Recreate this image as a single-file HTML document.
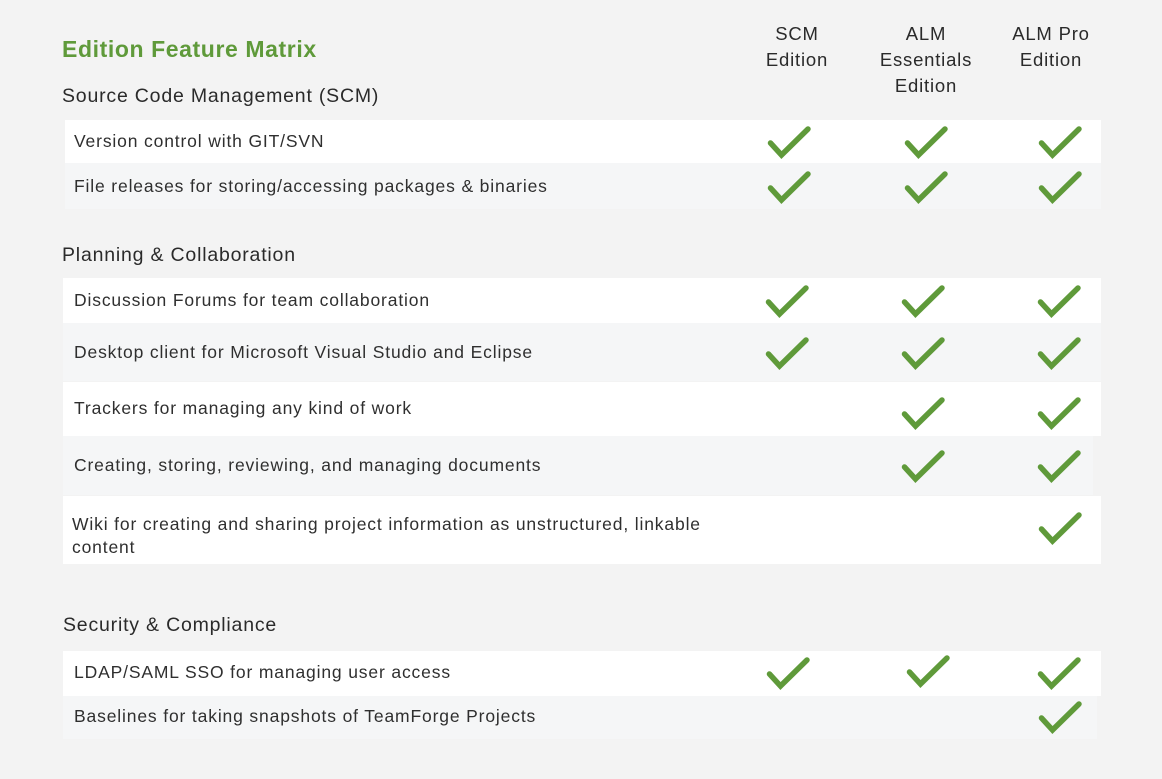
<!DOCTYPE html>
<html><head><meta charset="utf-8"><style>
body{margin:0;width:1162px;height:779px;background:#f3f3f3;font-family:"Liberation Sans",sans-serif;color:#2f2f2f;position:relative;overflow:hidden}
.a{position:absolute}
.t{font-weight:bold;color:#5f9a3a;font-size:23px;left:62px;top:36px;letter-spacing:0.6px}
.h{font-size:19.5px;left:62px;color:#2a2a2a;letter-spacing:0.8px}
.col{font-size:18.5px;text-align:center;line-height:26px;color:#2a2a2a;letter-spacing:0.8px}
.r{position:absolute;left:63px;width:1038px}
.w{background:#fff}.g{background:#f5f6f7}
.r span{position:absolute;left:11px;font-size:17.5px;letter-spacing:0.85px;line-height:23px;white-space:nowrap}
svg{position:absolute}
</style></head><body>
<div class="a t">Edition Feature Matrix</div>
<div class="a col" style="left:742px;width:110px;top:21px">SCM<br>Edition</div>
<div class="a col" style="left:861px;width:130px;top:21px">ALM<br>Essentials<br>Edition</div>
<div class="a col" style="left:991px;width:120px;top:21px">ALM Pro<br>Edition</div>
<div class="a h" style="top:85px">Source Code Management (SCM)</div>
<div class="r w" style="left:65px;width:1036px;top:120px;height:43px"><span style="top:10px;left:9px">Version control with GIT/SVN</span></div>
<div class="r g" style="left:65px;width:1036px;top:163px;height:46px"><span style="top:12px;left:9px">File releases for storing/accessing packages &amp; binaries</span></div>
<div class="a h" style="top:244px">Planning &amp; Collaboration</div>
<div class="r w" style="top:278px;height:45px"><span style="top:11px">Discussion Forums for team collaboration</span></div>
<div class="r g" style="top:323px;height:58px"><span style="top:18px">Desktop client for Microsoft Visual Studio and Eclipse</span></div>
<div class="r w" style="top:382px;height:54px"><span style="top:15px">Trackers for managing any kind of work</span></div>
<div class="r g" style="top:436px;height:59px;width:1030px"><span style="top:18px">Creating, storing, reviewing, and managing documents</span></div>
<div class="r w" style="top:496px;height:68px"><span style="top:17px;left:9px">Wiki for creating and sharing project information as unstructured, linkable<br>content</span></div>
<div class="a h" style="top:614px;left:63px">Security &amp; Compliance</div>
<div class="r w" style="top:651px;height:45px"><span style="top:10px">LDAP/SAML SSO for managing user access</span></div>
<div class="r g" style="top:696px;height:43px;width:1034px"><span style="top:9px">Baselines for taking snapshots of TeamForge Projects</span></div>

<svg width="0" height="0"><defs><path id="c" d="M3.5 18 L14.5 30 L41 4" fill="none" stroke="#5f9a3a" stroke-width="5.5" stroke-linejoin="miter" stroke-linecap="round"/></defs></svg>
<svg class="a" style="left:767px;top:125px" width="46" height="35"><use href="#c"/></svg>
<svg class="a" style="left:904px;top:125px" width="46" height="35"><use href="#c"/></svg>
<svg class="a" style="left:1038px;top:125px" width="46" height="35"><use href="#c"/></svg>
<svg class="a" style="left:767px;top:170px" width="46" height="35"><use href="#c"/></svg>
<svg class="a" style="left:904px;top:170px" width="46" height="35"><use href="#c"/></svg>
<svg class="a" style="left:1038px;top:170px" width="46" height="35"><use href="#c"/></svg>

<svg class="a" style="left:765px;top:284px" width="46" height="35"><use href="#c"/></svg>
<svg class="a" style="left:901px;top:284px" width="46" height="35"><use href="#c"/></svg>
<svg class="a" style="left:1037px;top:284px" width="46" height="35"><use href="#c"/></svg>
<svg class="a" style="left:765px;top:336px" width="46" height="35"><use href="#c"/></svg>
<svg class="a" style="left:901px;top:336px" width="46" height="35"><use href="#c"/></svg>
<svg class="a" style="left:1037px;top:336px" width="46" height="35"><use href="#c"/></svg>
<svg class="a" style="left:901px;top:396px" width="46" height="35"><use href="#c"/></svg>
<svg class="a" style="left:1037px;top:396px" width="46" height="35"><use href="#c"/></svg>
<svg class="a" style="left:901px;top:449px" width="46" height="35"><use href="#c"/></svg>
<svg class="a" style="left:1037px;top:449px" width="46" height="35"><use href="#c"/></svg>
<svg class="a" style="left:1038px;top:511px" width="46" height="35"><use href="#c"/></svg>

<svg class="a" style="left:766px;top:656px" width="46" height="35"><use href="#c"/></svg>
<svg class="a" style="left:906px;top:654px" width="46" height="35"><use href="#c"/></svg>
<svg class="a" style="left:1037px;top:656px" width="46" height="35"><use href="#c"/></svg>
<svg class="a" style="left:1038px;top:700px" width="46" height="35"><use href="#c"/></svg>
</body></html>
